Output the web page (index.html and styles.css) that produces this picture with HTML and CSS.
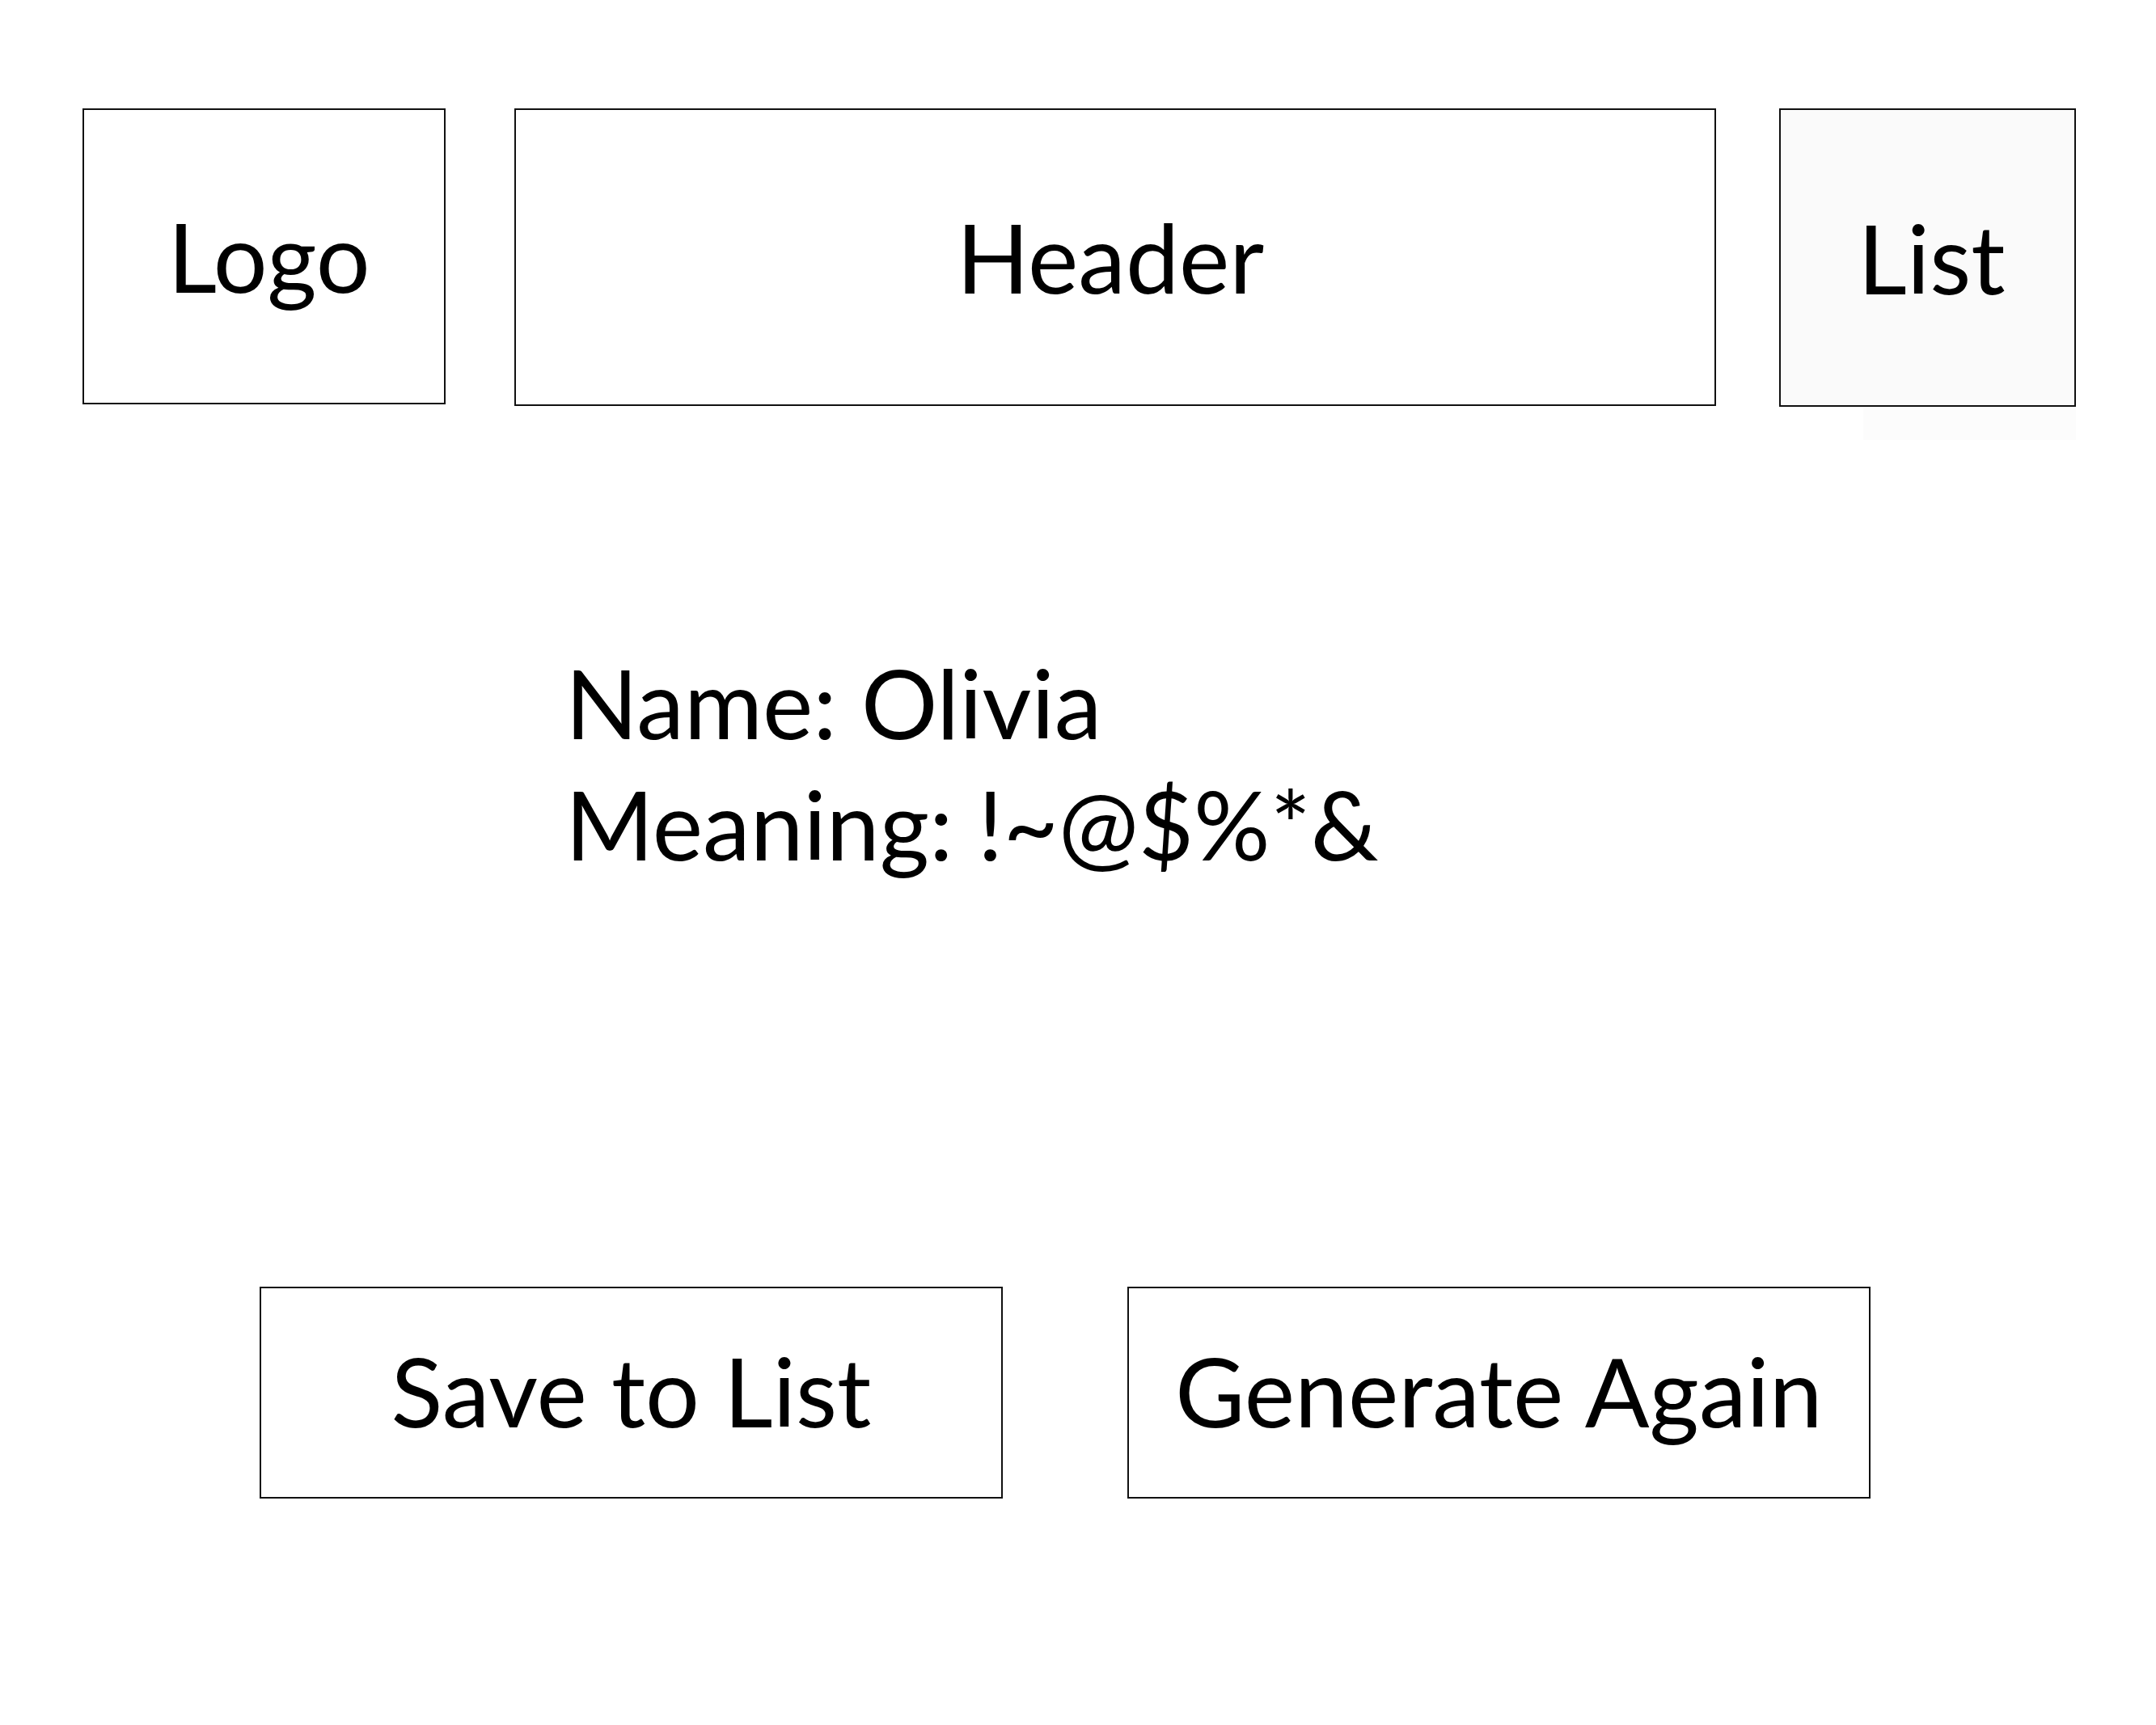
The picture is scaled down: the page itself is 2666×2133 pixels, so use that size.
FILE: index.html
```html
<!DOCTYPE html>
<html lang="en">
<head>
<meta charset="utf-8">
<title>Name Generator</title>
<link rel="stylesheet" href="styles.css">
</head>
<body>
  <div class="page">
    <header class="topbar">
      <div class="box logo">Logo</div>
      <div class="box header">Header</div>
      <div class="list-col">
        <div class="box list">List</div>
        <div class="list-strip"></div>
      </div>
    </header>
    <main class="result">
      <div class="line">Name: Olivia</div>
      <div class="line">Meaning: !~@$%*&amp;</div>
    </main>
    <div class="actions">
      <div class="box btn">Save to List</div>
      <div class="box btn">Generate Again</div>
    </div>
  </div>
</body>
</html>
```

FILE: styles.css
```css
html, body {
  margin: 0;
  padding: 0;
  background: #ffffff;
}

body {
  font-family: "Lato", "Open Sans", "Liberation Sans", sans-serif;
  color: #000000;
  font-size: 118px;
}

.page {
  width: 2666px;
  min-height: 2133px;
}

.topbar {
  display: flex;
  align-items: flex-start;
  padding: 134px 0 0 102px;
}

.box {
  box-sizing: border-box;
  border: 2px solid #111111;
  display: flex;
  align-items: center;
  justify-content: center;
  line-height: 1;
  background: #ffffff;
}

.logo {
  width: 449px;
  height: 366px;
  padding-left: 12px;
}

.header {
  width: 1486px;
  height: 368px;
  margin-left: 85px;
  padding-right: 12px;
}

.list-col {
  display: flex;
  flex-direction: column;
  align-items: flex-end;
  margin-left: 78px;
}

.list {
  width: 367px;
  height: 369px;
  background: #fafafa;
  padding-left: 10px;
}

.list-strip {
  width: 263px;
  height: 41px;
  background: #fcfcfc;
}

.result {
  margin-top: 250px;
  padding-left: 699px;
}

.line {
  line-height: 150px;
  height: 150px;
}

.actions {
  display: flex;
  gap: 154px;
  margin-top: 497px;
  padding-left: 321px;
}

.btn {
  width: 919px;
  height: 262px;
  padding-bottom: 4px;
}
```
